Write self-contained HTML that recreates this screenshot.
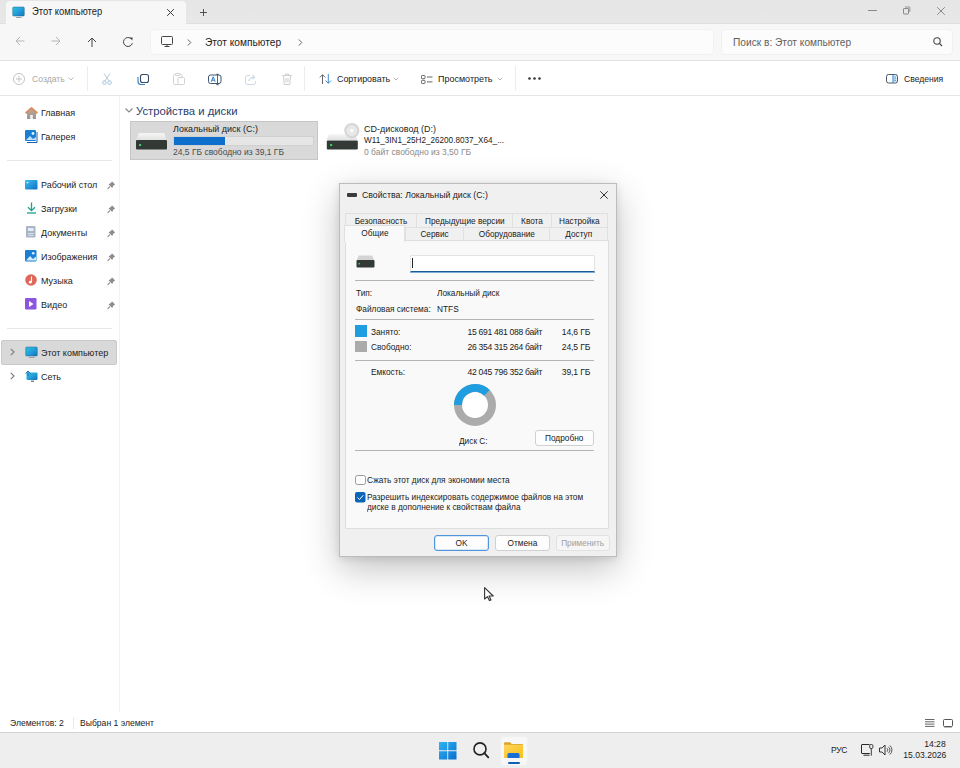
<!DOCTYPE html>
<html><head><meta charset="utf-8">
<style>
*{margin:0;padding:0;box-sizing:border-box}
html,body{width:960px;height:768px;overflow:hidden;background:#fff;font-family:"Liberation Sans",sans-serif;color:#1b1b1b}
.a{position:absolute;white-space:nowrap}
svg{position:absolute;overflow:visible}
#tabstrip{left:0;top:0;width:960px;height:24px;background:linear-gradient(#e5e5e5,#e8e8e8);border-bottom:1px solid #dfdfdf}
#tab{left:6px;top:1px;width:180px;height:24px;background:#f7f7f7;border-radius:4px 4px 0 0}
#addr{left:0;top:24px;width:960px;height:37px;background:#f7f7f7;border-bottom:1px solid #e3e3e3}
.box{background:#fcfcfc;border:1px solid #f1f1f1;border-radius:4px}
#toolbar{left:0;top:61px;width:960px;height:35px;background:#fff;border-bottom:1px solid #e5e5e5}
#nav{left:0;top:96px;width:120px;height:616px;background:#fff;border-right:1px solid #f2f2f2}
.t{font-size:9.90px;line-height:12px}
.gr{color:#9a9a9a}
#status{left:0;top:712px;width:960px;height:20px;background:#fff}
#taskbar{left:0;top:732px;width:960px;height:36px;background:#eeeeee;border-top:1px solid #d4d4d4}
#dlg{left:339px;top:183px;width:278px;height:374px;background:#f0f0f0;border:1px solid #bcbcbc;box-shadow:0 12px 34px rgba(0,0,0,.24),0 2px 8px rgba(0,0,0,.10)}
.navi{left:41px;font-size:9.90px;line-height:12px;color:#1b1b1b;margin-top:0.8px}
.pin{left:106px}
.tb{font-size:9.08px;line-height:13px;text-align:center;background:#f0f0f0;border:1px solid #e0e0e0;border-bottom:none;color:#1b1b1b}
.sel{background:#f9f9f9;line-height:14px;border-color:#e0e0e0}
.dt{font-size:9.13px;line-height:12px;color:#1b1b1b}
.num{width:102px;text-align:right;font-size:9.46px;letter-spacing:-0.33px}
.num2{width:50px;text-align:right;font-size:9.46px;letter-spacing:-0.17px}
.btn{font-size:9.13px;line-height:14px;text-align:center;background:#fdfdfd;border:1px solid #d0d0d0;border-radius:3px;color:#1b1b1b}
.sx{display:inline-block;transform:scaleX(0.9091)}
</style></head><body>
<!-- tab strip -->
<div class="a" id="tabstrip"></div>
<div class="a" id="tab"></div>
<svg style="left:12px;top:7px" width="13" height="12" viewBox="0 0 13 12"><defs><linearGradient id="mon" x1="0" y1="0" x2="1" y2="1"><stop offset="0" stop-color="#2ec0d8"/><stop offset="0.5" stop-color="#22a0dc"/><stop offset="1" stop-color="#1470b8"/></linearGradient></defs><rect x="0.7" y="0" width="11.6" height="9" rx="1" fill="url(#mon)" stroke="#2a6a96" stroke-width="0.5"/><rect x="4" y="10" width="5.5" height="1" fill="#a0a0a0"/></svg>
<div class="a" style="left:32px;top:6px;font-size:10.34px;line-height:12px;color:#1b1b1b"><span class="sx" style="transform-origin:left">Этот компьютер</span></div>
<svg style="left:166.5px;top:8.5px" width="7" height="7" viewBox="0 0 7 7"><path d="M0.2 0.2L6.8 6.8M6.8 0.2L0.2 6.8" stroke="#3a3a3a" stroke-width="1"/></svg>
<svg style="left:199.5px;top:8.5px" width="7" height="7" viewBox="0 0 7 7"><path d="M3.5 0V7M0 3.5H7" stroke="#4a4a4a" stroke-width="0.95"/></svg>
<svg style="left:868px;top:6px" width="10" height="10" viewBox="0 0 10 10"><path d="M0 4.5H9" stroke="#8a8a8a" stroke-width="1"/></svg>
<svg style="left:902px;top:6px" width="9" height="9" viewBox="0 0 9 9"><rect x="1.5" y="2.5" width="5" height="5.5" rx="0.5" fill="none" stroke="#8a8a8a" stroke-width="1"/><path d="M3 1h4.3a0.5 0.5 0 0 1 0.5 0.5V6" fill="none" stroke="#8a8a8a" stroke-width="0.9"/></svg>
<svg style="left:937px;top:7px" width="8" height="8" viewBox="0 0 8 8"><path d="M0.2 0.2L7.8 7.8M7.8 0.2L0.2 7.8" stroke="#888" stroke-width="1"/></svg>

<!-- address row -->
<div class="a" id="addr"></div>
<svg style="left:15px;top:36px" width="10" height="10" viewBox="0 0 10 10"><path d="M9.5 5H1M5 1L1 5L5 9" fill="none" stroke="#b5b5b5" stroke-width="1"/></svg>
<svg style="left:51px;top:36px" width="10" height="10" viewBox="0 0 10 10"><path d="M0.5 5H9M5 1L9 5L5 9" fill="none" stroke="#b5b5b5" stroke-width="1"/></svg>
<svg style="left:87px;top:37px" width="10" height="10" viewBox="0 0 10 10"><path d="M5 10V1M1 5L5 1L9 5" fill="none" stroke="#444" stroke-width="1"/></svg>
<svg style="left:123.2px;top:36.8px" width="10" height="10" viewBox="0 0 10 10"><path d="M9.35 6.2A4.5 4.5 0 1 1 7.9 1.55" fill="none" stroke="#444" stroke-width="1"/><path d="M6.6 0.6L9.6 0.4L9.3 3.5z" fill="#444"/></svg>
<div class="a box" style="left:150px;top:29px;width:564px;height:26px"></div>
<div class="a box" style="left:721px;top:29px;width:232px;height:26px"></div>
<svg style="left:161px;top:36px" width="12" height="11" viewBox="0 0 12 11"><rect x="0.5" y="0.5" width="11" height="8" rx="1" fill="none" stroke="#444" stroke-width="1"/><path d="M3.5 10.5h5M6 9v1.5" stroke="#444" stroke-width="1"/></svg>
<svg style="left:187px;top:38.5px" width="5" height="7" viewBox="0 0 5 7"><path d="M0.8 0.5L3.8 3.5L0.8 6.5" fill="none" stroke="#555" stroke-width="0.9"/></svg>
<div class="a" style="left:205px;top:36px;font-size:11.2px;line-height:13px;color:#1b1b1b"><span class="sx" style="transform-origin:left">Этот компьютер</span></div>
<svg style="left:298px;top:38.5px" width="5" height="7" viewBox="0 0 5 7"><path d="M0.8 0.5L3.8 3.5L0.8 6.5" fill="none" stroke="#555" stroke-width="0.9"/></svg>
<div class="a" style="left:733px;top:36px;font-size:11.2px;line-height:13px;color:#5f5f5f"><span class="sx" style="transform-origin:left">Поиск в: Этот компьютер</span></div>
<svg style="left:933px;top:37px" width="10" height="10" viewBox="0 0 10 10"><circle cx="4" cy="4" r="3.2" fill="none" stroke="#444" stroke-width="1.1"/><path d="M6.4 6.4L9 9" stroke="#444" stroke-width="1.2"/></svg>

<!-- toolbar -->
<div class="a" id="toolbar"></div>
<svg style="left:13px;top:73px" width="12" height="12" viewBox="0 0 12 12"><circle cx="6" cy="6" r="5.5" fill="none" stroke="#c4c4c4" stroke-width="1"/><path d="M6 3v6M3 6h6" stroke="#c4c4c4" stroke-width="1"/></svg>
<div class="a t gr" style="left:31.5px;top:73px;font-size:9.46px;color:#a8a8a8"><span class="sx" style="transform-origin:left">Создать</span></div>
<svg style="left:68px;top:77px" width="6" height="4" viewBox="0 0 6 4"><path d="M0.5 0.5L3 3L5.5 0.5" fill="none" stroke="#bbb" stroke-width="1"/></svg>
<div class="a" style="left:87px;top:66px;width:1px;height:25px;background:#ececec"></div>
<svg style="left:102px;top:73px" width="10" height="12" viewBox="0 0 10 12"><path d="M2 0.5L7.2 8.2M8 0.5L2.8 8.2" stroke="#b9c9d9" stroke-width="1"/><circle cx="2.4" cy="9.6" r="1.8" fill="none" stroke="#a9c4dc" stroke-width="1"/><circle cx="7.6" cy="9.6" r="1.8" fill="none" stroke="#a9c4dc" stroke-width="1"/></svg>
<svg style="left:137px;top:73.5px" width="12" height="11" viewBox="0 0 12 11"><rect x="3.5" y="0.5" width="8" height="8" rx="2" fill="#fff" stroke="#344a66" stroke-width="1.1"/><path d="M1 3v4.5a3 3 0 0 0 3 3h4" fill="none" stroke="#3a78b8" stroke-width="1.1"/></svg>
<svg style="left:173px;top:73px" width="12" height="12" viewBox="0 0 12 12"><rect x="0.5" y="1.5" width="8.5" height="10" rx="1" fill="none" stroke="#d2d2d2" stroke-width="1"/><rect x="5" y="4.5" width="6.5" height="7" rx="1" fill="#fff" stroke="#d2d2d2" stroke-width="1"/><rect x="2.5" y="0.5" width="4.5" height="2" rx="0.5" fill="#fff" stroke="#d2d2d2" stroke-width="1"/></svg>
<svg style="left:208px;top:74px" width="14" height="11" viewBox="0 0 14 11"><rect x="0.5" y="1" width="12.5" height="8.5" rx="2" fill="#fff" stroke="#3f5670" stroke-width="1"/><path d="M3.2 7.8L5.2 2.8L7.2 7.8M3.9 6.2h2.6" fill="none" stroke="#2d7fd1" stroke-width="1"/><path d="M9.5 0v11M8.3 0.3h2.4M8.3 10.7h2.4" stroke="#3f5670" stroke-width="0.9"/></svg>
<svg style="left:245px;top:74px" width="12" height="11" viewBox="0 0 12 11"><path d="M5 1.5H2.5a2 2 0 0 0-2 2v5a2 2 0 0 0 2 2h6a2 2 0 0 0 2-2V7" fill="none" stroke="#ccd6e0" stroke-width="1"/><path d="M4 7c0-2.5 2-3.8 5-3.8M7.5 1l2.2 2.2L7.5 5.4" fill="none" stroke="#b9cde0" stroke-width="1"/></svg>
<svg style="left:281.5px;top:73px" width="10" height="12" viewBox="0 0 10 12"><path d="M0.3 2.5h9.4M3.5 2.5V1h3v1.5M1.5 2.5l0.7 9h5.6l0.7-9M4 5v4.5M6 5v4.5" fill="none" stroke="#cdcdcd" stroke-width="1"/></svg>
<div class="a" style="left:304px;top:66px;width:1px;height:25px;background:#ececec"></div>
<svg style="left:319px;top:74px" width="13" height="10" viewBox="0 0 13 10"><path d="M3.5 10V0.8M0.8 3.4L3.5 0.7l2.7 2.7" fill="none" stroke="#555" stroke-width="0.9"/><path d="M9.3 0v9.2M6.6 6.6l2.7 2.7 2.7-2.7" fill="none" stroke="#2d7fd1" stroke-width="0.9"/></svg>
<div class="a t" style="left:336.5px;top:73px;font-size:9.79px"><span class="sx" style="transform-origin:left">Сортировать</span></div>
<svg style="left:393px;top:77px" width="6" height="4" viewBox="0 0 6 4"><path d="M0.8 0.8L3 3L5.2 0.8" fill="none" stroke="#aaa" stroke-width="0.9"/></svg>
<svg style="left:421px;top:74.5px" width="12" height="9" viewBox="0 0 12 9"><rect x="0.5" y="0.5" width="3.5" height="3.2" rx="0.8" fill="none" stroke="#555" stroke-width="0.9"/><rect x="0.5" y="5.3" width="3.5" height="3.2" rx="0.8" fill="none" stroke="#555" stroke-width="0.9"/><path d="M6 2h5.5M6 6.9h5.5" stroke="#555" stroke-width="0.9"/></svg>
<div class="a t" style="left:438.3px;top:73px;font-size:9.90px"><span class="sx" style="transform-origin:left">Просмотреть</span></div>
<svg style="left:497px;top:77px" width="6" height="4" viewBox="0 0 6 4"><path d="M0.8 0.8L3 3L5.2 0.8" fill="none" stroke="#aaa" stroke-width="0.9"/></svg>
<div class="a" style="left:515px;top:66px;width:1px;height:25px;background:#ececec"></div>
<svg style="left:528px;top:77px" width="13" height="3" viewBox="0 0 13 3"><circle cx="1.5" cy="1.5" r="1.3" fill="#333"/><circle cx="6.5" cy="1.5" r="1.3" fill="#333"/><circle cx="11.5" cy="1.5" r="1.3" fill="#333"/></svg>
<svg style="left:886px;top:74px" width="12" height="9.5" viewBox="0 0 12 9.5"><rect x="7" y="1" width="4" height="7.5" fill="#dcecfa"/><rect x="0.5" y="0.5" width="11" height="8.5" rx="2" fill="none" stroke="#4a5a6c" stroke-width="1"/><path d="M7 0.5v8.5" stroke="#2d7fd1" stroke-width="1"/><path d="M8.3 3h1.6M8.3 4.8h1.6M8.3 6.6h1.6" stroke="#2d7fd1" stroke-width="0.8"/></svg>
<div class="a t" style="left:904px;top:73px;font-size:9.46px"><span class="sx" style="transform-origin:left">Сведения</span></div>

<!-- nav pane -->
<div class="a" id="nav"></div>

<!-- nav pane items -->
<svg style="left:24.5px;top:106.5px" width="13" height="12" viewBox="0 0 13 12"><defs><linearGradient id="hb" x1="0" y1="0" x2="0" y2="1"><stop offset="0" stop-color="#b9a79a"/><stop offset="1" stop-color="#9c9696"/></linearGradient></defs><path d="M2 5.5L6.5 1.8L11 5.5V12H2z" fill="url(#hb)"/><path d="M0.6 6.2L6.5 1L12.4 6.2" fill="none" stroke="#d88d5c" stroke-width="1.8" stroke-linejoin="round"/><rect x="5.2" y="8" width="2.6" height="4" fill="#f4f1ef"/></svg>
<div class="a navi" style="top:106px"><span class="sx" style="transform-origin:left">Главная</span></div>
<svg style="left:25px;top:130px" width="13" height="13" viewBox="0 0 13 13"><rect x="0" y="0" width="11" height="11" rx="1" fill="#1b7fd6"/><path d="M1 10L5 6l3 3 3-2v3z" fill="#bfe0ff"/><circle cx="8" cy="3.5" r="1.4" fill="#e0f0ff"/><path d="M12 2v10.5H2" fill="none" stroke="#1b5fae" stroke-width="1"/></svg>
<div class="a navi" style="top:130px"><span class="sx" style="transform-origin:left">Галерея</span></div>
<div class="a" style="left:7px;top:160px;width:105px;height:1px;background:#e6e6e6"></div>

<svg style="left:25px;top:180px" width="13" height="10" viewBox="0 0 13 10"><defs><linearGradient id="dsk" x1="0" y1="0" x2="1" y2="1"><stop offset="0" stop-color="#3ec0ef"/><stop offset="1" stop-color="#0e6fc4"/></linearGradient></defs><rect x="0" y="0" width="12.5" height="9.5" rx="1" fill="url(#dsk)"/><rect x="1.5" y="2" width="2" height="1.2" fill="#d8f2ff"/></svg>
<div class="a navi" style="top:178px"><span class="sx" style="transform-origin:left">Рабочий стол</span></div>
<svg style="left:26px;top:202px" width="11" height="12" viewBox="0 0 11 12"><path d="M5.5 0.5v8M2 5.2l3.5 3.5L9 5.2" fill="none" stroke="#18a38a" stroke-width="1.3"/><path d="M1 11h9" stroke="#18a38a" stroke-width="1.3"/></svg>
<div class="a navi" style="top:202px"><span class="sx" style="transform-origin:left">Загрузки</span></div>
<svg style="left:26px;top:226px" width="10" height="12" viewBox="0 0 10 12"><rect x="0" y="0" width="9.5" height="11.5" rx="1" fill="#a9b6c6"/><rect x="2" y="2" width="5.5" height="3" fill="#e6ecf3"/><path d="M2 7.5h5.5M2 9.3h5.5" stroke="#e6ecf3" stroke-width="0.8"/></svg>
<div class="a navi" style="top:226px"><span class="sx" style="transform-origin:left">Документы</span></div>
<svg style="left:25px;top:250px" width="12" height="12" viewBox="0 0 12 12"><rect x="0" y="0" width="11.5" height="11.5" rx="1" fill="#1b7fd6"/><path d="M1 10.5L5 6l3 3 3-2.5v4z" fill="#d6ecff"/><circle cx="8.2" cy="3.2" r="1.3" fill="#e0f0ff"/></svg>
<div class="a navi" style="top:250px"><span class="sx" style="transform-origin:left">Изображения</span></div>
<svg style="left:25px;top:274px" width="12" height="12" viewBox="0 0 12 12"><circle cx="6" cy="6" r="5.8" fill="#e0685a"/><path d="M6.5 2.5v5.5" stroke="#fff" stroke-width="1.1"/><circle cx="5.3" cy="8.2" r="1.4" fill="#fff"/></svg>
<div class="a navi" style="top:274px"><span class="sx" style="transform-origin:left">Музыка</span></div>
<svg style="left:25px;top:298px" width="12" height="12" viewBox="0 0 12 12"><rect x="0" y="0" width="11.5" height="11.5" rx="1.2" fill="#8b55e0"/><path d="M4 3l4.5 3L4 9z" fill="#fff"/></svg>
<div class="a navi" style="top:298px"><span class="sx" style="transform-origin:left">Видео</span></div>
<svg style="left:106.5px;top:180.5px" width="8.5" height="8.5" viewBox="0 0 8 8"><path d="M4.6 0.3L7.7 3.4L6.3 4.1L4.9 6.5L1.5 3.1L3.9 1.7z" fill="#8e8e8e"/><path d="M3 5L0.6 7.4" stroke="#8e8e8e" stroke-width="1.1"/></svg>
<svg style="left:106.5px;top:204.5px" width="8.5" height="8.5" viewBox="0 0 8 8"><path d="M4.6 0.3L7.7 3.4L6.3 4.1L4.9 6.5L1.5 3.1L3.9 1.7z" fill="#8e8e8e"/><path d="M3 5L0.6 7.4" stroke="#8e8e8e" stroke-width="1.1"/></svg>
<svg style="left:106.5px;top:228.5px" width="8.5" height="8.5" viewBox="0 0 8 8"><path d="M4.6 0.3L7.7 3.4L6.3 4.1L4.9 6.5L1.5 3.1L3.9 1.7z" fill="#8e8e8e"/><path d="M3 5L0.6 7.4" stroke="#8e8e8e" stroke-width="1.1"/></svg>
<svg style="left:106.5px;top:252.5px" width="8.5" height="8.5" viewBox="0 0 8 8"><path d="M4.6 0.3L7.7 3.4L6.3 4.1L4.9 6.5L1.5 3.1L3.9 1.7z" fill="#8e8e8e"/><path d="M3 5L0.6 7.4" stroke="#8e8e8e" stroke-width="1.1"/></svg>
<svg style="left:106.5px;top:276.5px" width="8.5" height="8.5" viewBox="0 0 8 8"><path d="M4.6 0.3L7.7 3.4L6.3 4.1L4.9 6.5L1.5 3.1L3.9 1.7z" fill="#8e8e8e"/><path d="M3 5L0.6 7.4" stroke="#8e8e8e" stroke-width="1.1"/></svg>
<svg style="left:106.5px;top:300.5px" width="8.5" height="8.5" viewBox="0 0 8 8"><path d="M4.6 0.3L7.7 3.4L6.3 4.1L4.9 6.5L1.5 3.1L3.9 1.7z" fill="#8e8e8e"/><path d="M3 5L0.6 7.4" stroke="#8e8e8e" stroke-width="1.1"/></svg>
<div class="a" style="left:7px;top:328px;width:105px;height:1px;background:#e6e6e6"></div>
<div class="a" style="left:1px;top:340px;width:116px;height:24.5px;background:#d9d9d9;border:1px solid #c9c9c9;border-radius:2px"></div>
<svg style="left:10px;top:348px" width="5" height="8" viewBox="0 0 5 8"><path d="M0.8 0.8L4 4L0.8 7.2" fill="none" stroke="#808080" stroke-width="1.2"/></svg>
<svg style="left:25px;top:347px" width="13" height="12" viewBox="0 0 13 12"><rect x="0.7" y="0" width="11.6" height="9" rx="1" fill="url(#mon)" stroke="#2a6a96" stroke-width="0.5"/><rect x="4" y="10" width="5.5" height="1" fill="#a0a0a0"/></svg>
<div class="a navi" style="top:346px"><span class="sx" style="transform-origin:left">Этот компьютер</span></div>
<svg style="left:10px;top:372px" width="5" height="8" viewBox="0 0 5 8"><path d="M0.8 0.8L4 4L0.8 7.2" fill="none" stroke="#808080" stroke-width="1.2"/></svg>
<svg style="left:25px;top:370px" width="13" height="13" viewBox="0 0 13 13"><rect x="1.5" y="2.5" width="11" height="7.5" rx="1" fill="url(#mon)"/><rect x="6" y="10.5" width="3" height="1.5" fill="#888"/><path d="M0.5 3.5L3 1L5.5 3.5M3 1v5" fill="none" stroke="#1a6fc0" stroke-width="1"/></svg>
<div class="a navi" style="top:370px"><span class="sx" style="transform-origin:left">Сеть</span></div>

<!-- content -->
<svg style="left:124.5px;top:107.5px" width="8" height="5" viewBox="0 0 8 5"><path d="M0.5 0.5L4 4L7.5 0.5" fill="none" stroke="#8a8a8a" stroke-width="1.2"/></svg>
<div class="a" style="left:136px;top:103.7px;font-size:11.3px;line-height:14px;color:#2c3d6e">Устройства и диски</div>
<div class="a" style="left:130px;top:121px;width:188px;height:39px;background:#d9d9d9;border:1px solid #c6c6c6"></div>
<svg style="left:135px;top:130px" width="33" height="21" viewBox="0 0 33 21"><defs><linearGradient id="dtop" x1="0" y1="0" x2="0" y2="1"><stop offset="0" stop-color="#f6f6f6"/><stop offset="1" stop-color="#e2e2e2"/></linearGradient></defs><path d="M4 3h25l3 7H1z" fill="url(#dtop)"/><rect x="1" y="10" width="31" height="9.5" rx="1" fill="#333a36"/><rect x="4" y="14" width="2.2" height="2" fill="#3fc760"/></svg>
<div class="a" style="left:173px;top:123px;font-size:9.90px;line-height:12px;color:#1b1b1b"><span class="sx" style="transform-origin:left">Локальный диск (C:)</span></div>
<div class="a" style="left:172.5px;top:136px;width:141px;height:10px;background:#e6e6e6;border:1px solid #d0d0d0"></div>
<div class="a" style="left:173.5px;top:137px;width:51px;height:8px;background:#0f6fcc"></div>
<div class="a" style="left:173px;top:146px;font-size:9.35px;line-height:12px;color:#4a4a4a"><span class="sx" style="transform-origin:left">24,5 ГБ свободно из 39,1 ГБ</span></div>

<svg style="left:326px;top:122px" width="33" height="29" viewBox="0 0 33 29"><path d="M3 12h26l2.5 6H0.5z" fill="url(#dtop)"/><rect x="0.8" y="18.5" width="31" height="9" rx="1" fill="#333a36"/><rect x="4" y="22" width="2.2" height="2" fill="#3fc760"/><circle cx="25.8" cy="8.6" r="7.6" fill="#d6d6d6"/><circle cx="25.8" cy="8.6" r="5.5" fill="#e8e8e8"/><circle cx="25.8" cy="8.6" r="1.6" fill="#fff"/></svg>
<div class="a" style="left:364px;top:123px;font-size:9.90px;line-height:12px;color:#1b1b1b"><span class="sx" style="transform-origin:left">CD-дисковод (D:)</span></div>
<div class="a" style="left:364px;top:134px;font-size:8.97px;line-height:12px;color:#1b1b1b"><span class="sx" style="transform-origin:left">W11_3IN1_25H2_26200.8037_X64_...</span></div>
<div class="a" style="left:364px;top:146px;font-size:9.35px;line-height:12px;color:#8a8a8a"><span class="sx" style="transform-origin:left">0 байт свободно из 3,50 ГБ</span></div>
<div class="a" id="status"></div>


<!-- dialog -->
<div class="a" id="dlg"></div>
<div class="a" style="left:346.5px;top:193px;width:10.5px;height:4px;background:#3c3c3c;border-radius:1px"></div>
<div class="a" style="left:362px;top:188.5px;font-size:9.62px;line-height:12px;color:#1b1b1b"><span class="sx" style="transform-origin:left">Свойства: Локальный диск (C:)</span></div>
<svg style="left:600px;top:190.5px" width="8" height="8" viewBox="0 0 8 8"><path d="M0.3 0.3L7.7 7.7M7.7 0.3L0.3 7.7" stroke="#333" stroke-width="1"/></svg>

<div class="a" id="tabs"></div>
<div class="a tb" style="left:345px;top:213px;padding-top:0.5px;width:72px;height:14px"><span class="sx" style="transform-origin:center">Безопасность</span></div>
<div class="a tb" style="left:416px;top:213px;padding-top:0.5px;width:97px;height:14px"><span class="sx" style="transform-origin:center">Предыдущие версии</span></div>
<div class="a tb" style="left:512px;top:213px;padding-top:0.5px;width:40px;height:14px"><span class="sx" style="transform-origin:center">Квота</span></div>
<div class="a tb" style="left:551px;top:213px;padding-top:0.5px;width:57px;height:14px"><span class="sx" style="transform-origin:center">Настройка</span></div>
<div class="a tb" style="left:405px;top:227px;width:59px;height:14px"><span class="sx" style="transform-origin:center">Сервис</span></div>
<div class="a tb" style="left:463px;top:227px;width:87px;height:14px"><span class="sx" style="transform-origin:center">Оборудование</span></div>
<div class="a tb" style="left:549px;top:227px;width:59px;height:14px"><span class="sx" style="transform-origin:center">Доступ</span></div>
<div class="a" style="left:345px;top:240px;width:264px;height:288.5px;background:#f9f9f9;border:1px solid #dedede"></div>
<div class="a tb sel" style="left:344px;top:225px;width:61px;height:17px"><span class="sx" style="transform-origin:center">Общие</span></div>

<svg style="left:356px;top:255px" width="19" height="14" viewBox="0 0 19 14"><path d="M2.5 0.5h13.5l2.2 4.5H0.8z" fill="#d4d4d4"/><rect x="0.5" y="5" width="18" height="7.5" rx="1" fill="#333a36"/><rect x="2.5" y="8" width="1.6" height="1.5" fill="#3fc760"/></svg>
<div class="a" style="left:410px;top:255px;width:185px;height:17px;background:#fff;border:1px solid #e3e3e3;border-bottom:1px solid #1a5c9a;box-shadow:0 1px 0 #7eaad6;border-radius:2px 2px 0 0"></div>
<div class="a" style="left:412px;top:258px;width:1px;height:10px;background:#222"></div>
<div class="a" style="left:355px;top:280px;width:239px;height:1px;background:#b4b4b4"></div>
<div class="a dt" style="left:356px;top:287px"><span class="sx" style="transform-origin:left">Тип:</span></div>
<div class="a dt" style="left:437px;top:287px"><span class="sx" style="transform-origin:left">Локальный диск</span></div>
<div class="a dt" style="left:356px;top:302.5px"><span class="sx" style="transform-origin:left">Файловая система:</span></div>
<div class="a dt" style="left:437px;top:302.5px"><span class="sx" style="transform-origin:left">NTFS</span></div>
<div class="a" style="left:355px;top:319px;width:239px;height:1px;background:#b4b4b4"></div>
<div class="a" style="left:355px;top:325px;width:12px;height:12px;background:#1e9ee0"></div>
<div class="a dt" style="left:371px;top:325.5px"><span class="sx" style="transform-origin:left">Занято:</span></div>
<div class="a dt num" style="left:440px;top:325.5px"><span class="sx" style="transform-origin:right">15 691 481 088 байт</span></div>
<div class="a dt num2" style="left:540px;top:325.5px"><span class="sx" style="transform-origin:right">14,6 ГБ</span></div>
<div class="a" style="left:355px;top:341px;width:12px;height:11px;background:#ababab"></div>
<div class="a dt" style="left:371px;top:341px"><span class="sx" style="transform-origin:left">Свободно:</span></div>
<div class="a dt num" style="left:440px;top:341px"><span class="sx" style="transform-origin:right">26 354 315 264 байт</span></div>
<div class="a dt num2" style="left:540px;top:341px"><span class="sx" style="transform-origin:right">24,5 ГБ</span></div>
<div class="a" style="left:355px;top:360px;width:239px;height:1px;background:#b4b4b4"></div>
<div class="a dt" style="left:371px;top:365.5px"><span class="sx" style="transform-origin:left">Емкость:</span></div>
<div class="a dt num" style="left:440px;top:365.5px"><span class="sx" style="transform-origin:right">42 045 796 352 байт</span></div>
<div class="a dt num2" style="left:540px;top:365.5px"><span class="sx" style="transform-origin:right">39,1 ГБ</span></div>
<svg style="left:452.60px;top:382.50px" width="44" height="44" viewBox="0 0 44 44"><circle cx="22" cy="22" r="13" fill="#fff"/><circle cx="22" cy="22" r="17.00" fill="none" stroke="#ababab" stroke-width="8.00"/><path d="M1.00 22.00 A21 21 0 0 1 36.68 6.98 L31.09 12.70 A13 13 0 0 0 9.00 22.00 Z" fill="#1e9ee0"/></svg>
<div class="a dt" style="left:459px;top:435.3px"><span class="sx" style="transform-origin:left">Диск C:</span></div>
<div class="a btn" style="left:535px;top:430px;width:59px;height:16px"><span class="sx" style="transform-origin:center">Подробно</span></div>
<div class="a" style="left:355px;top:450px;width:239px;height:1px;background:#b4b4b4"></div>
<div class="a" style="left:355px;top:474.5px;width:10.5px;height:10.5px;background:#fdfdfd;border:1px solid #9a9a9a;border-radius:2.5px"></div>
<div class="a dt" style="left:367px;top:473.5px"><span class="sx" style="transform-origin:left">Сжать этот диск для экономии места</span></div>
<svg style="left:355px;top:491.5px" width="11" height="11" viewBox="0 0 11 11"><rect x="0" y="0" width="10.5" height="10.5" rx="2" fill="#0a64b8"/><path d="M2.5 5.5L4.5 7.5L8.3 3.2" fill="none" stroke="#fff" stroke-width="1"/></svg>
<div class="a dt" style="left:367px;top:490.5px"><span class="sx" style="transform-origin:left">Разрешить индексировать содержимое файлов на этом</span></div>
<div class="a dt" style="left:367px;top:500.5px"><span class="sx" style="transform-origin:left">диске в дополнение к свойствам файла</span></div>
<div class="a btn" style="left:434px;top:535px;width:55px;height:16px;border:1px solid #4f95dc;box-shadow:inset 0 0 0 0.5px #b5d3f0"><span class="sx" style="transform-origin:center">OK</span></div>
<div class="a btn" style="left:495px;top:535px;width:55px;height:16px"><span class="sx" style="transform-origin:center">Отмена</span></div>
<div class="a btn" style="left:556px;top:535px;width:54px;height:16px;color:#a0a0a0;border-color:#e2e2e2;background:#f6f6f6"><span class="sx" style="transform-origin:center">Применить</span></div>


<!-- status bar -->
<div class="a" style="left:10px;top:717px;font-size:9.46px;line-height:12px;color:#1b1b1b"><span class="sx" style="transform-origin:left">Элементов: 2</span></div>
<div class="a" style="left:73px;top:717px;width:1px;height:12px;background:#eaeaea"></div>
<div class="a" style="left:80px;top:717px;font-size:9.46px;line-height:12px;color:#1b1b1b"><span class="sx" style="transform-origin:left">Выбран 1 элемент</span></div>
<svg style="left:925px;top:719px" width="10" height="8" viewBox="0 0 10 8"><path d="M0 0.5h9.5M0 2.8h9.5M0 5.1h9.5M0 7.4h9.5" stroke="#555" stroke-width="0.9"/></svg>
<svg style="left:943px;top:718.5px" width="10" height="9" viewBox="0 0 10 9"><rect x="0.5" y="0.5" width="9" height="7" rx="1" fill="none" stroke="#555" stroke-width="1"/><path d="M1 8.5h8" stroke="#aaa" stroke-width="0.8"/></svg>

<!-- taskbar -->
<div class="a" id="taskbar"></div>
<svg style="left:438.5px;top:741.5px" width="18" height="18" viewBox="0 0 18 18"><defs><linearGradient id="win" x1="0" y1="0" x2="1" y2="1"><stop offset="0" stop-color="#2fb4f2"/><stop offset="1" stop-color="#0a6fd0"/></linearGradient></defs><path d="M0 0h8.3v8.3H0zM9.2 0h8.3v8.3H9.2zM0 9.2h8.3v8.3H0zM9.2 9.2h8.3v8.3H9.2z" fill="url(#win)"/></svg>
<svg style="left:472.8px;top:741.8px" width="17" height="17" viewBox="0 0 17 17"><circle cx="7" cy="6.9" r="6" fill="none" stroke="#222" stroke-width="1.6"/><path d="M11.3 11.2L15.3 15.3" stroke="#222" stroke-width="1.8" stroke-linecap="round"/></svg>
<div class="a" style="left:500px;top:736px;width:28px;height:30px;background:#f7f7f7;border-radius:4px;border:1px solid #f0f0f0"></div>
<svg style="left:504px;top:741.5px" width="19" height="16.5" viewBox="0 0 19 16.5"><defs><linearGradient id="fb" x1="0" y1="0" x2="1" y2="1"><stop offset="0" stop-color="#fcd45c"/><stop offset="1" stop-color="#f7c21a"/></linearGradient></defs><path d="M0 1.2a1 1 0 0 1 1-1h5.2l1.6 1.8H18a1 1 0 0 1 1 1V15a1 1 0 0 1-1 1H1a1 1 0 0 1-1-1z" fill="#d9a62a"/><path d="M0 2.8h19V15a1 1 0 0 1-1 1H1a1 1 0 0 1-1-1z" fill="url(#fb)"/><path d="M3.5 12.5a1.5 1.5 0 0 1 1.5-1.5h9a1.5 1.5 0 0 1 1.5 1.5V16h-12z" fill="#1a6fd6"/></svg>
<div class="a" style="left:508px;top:762px;width:11.5px;height:2.2px;background:#0f5fb8;border-radius:1px"></div>
<div class="a" style="left:831px;top:744px;font-size:9.35px;line-height:12px;color:#1b1b1b;letter-spacing:-0.28px"><span class="sx" style="transform-origin:left">РУС</span></div>
<svg style="left:861px;top:744px" width="13" height="13" viewBox="0 0 13 13"><path d="M8.5 0.5H1a0.5 0.5 0 0 0-0.5 0.5v8a0.5 0.5 0 0 0 0.5 0.5h7.8" fill="none" stroke="#2a2a2a" stroke-width="1"/><path d="M2.5 11.2h6" stroke="#2a2a2a" stroke-width="1"/><rect x="8.7" y="0.5" width="3.2" height="4" rx="1.3" fill="#eee" stroke="#2a2a2a" stroke-width="0.9"/><path d="M10.3 4.5v7.2" stroke="#2a2a2a" stroke-width="0.9"/></svg>
<svg style="left:878.5px;top:744px" width="13" height="12" viewBox="0 0 13 12"><path d="M0.5 4h2.5l3-3v10l-3-3H0.5z" fill="none" stroke="#333" stroke-width="1"/><path d="M7.8 4.2a2.2 2.2 0 0 1 0 3.6M9.3 2.8a4 4 0 0 1 0 6.4M10.8 1.4a6 6 0 0 1 0 9.2" fill="none" stroke="#333" stroke-width="0.8"/></svg>
<div class="a" style="left:895px;top:737.5px;width:51px;text-align:right;font-size:9.46px;line-height:12px;color:#1b1b1b"><span class="sx" style="transform-origin:right">14:28</span></div>
<div class="a" style="left:895px;top:749px;width:51px;text-align:right;font-size:9.46px;line-height:12px;color:#1b1b1b"><span class="sx" style="transform-origin:right">15.03.2026</span></div>

<!-- cursor -->
<svg style="left:484px;top:587px" width="11" height="15" viewBox="0 0 11 15"><path d="M0.6 0.6V12L3.4 9.6L5.4 13.6L7 12.9L5.1 9H9.2z" fill="#fff" stroke="#333" stroke-width="1.1" stroke-linejoin="round"/></svg>
</body></html>
